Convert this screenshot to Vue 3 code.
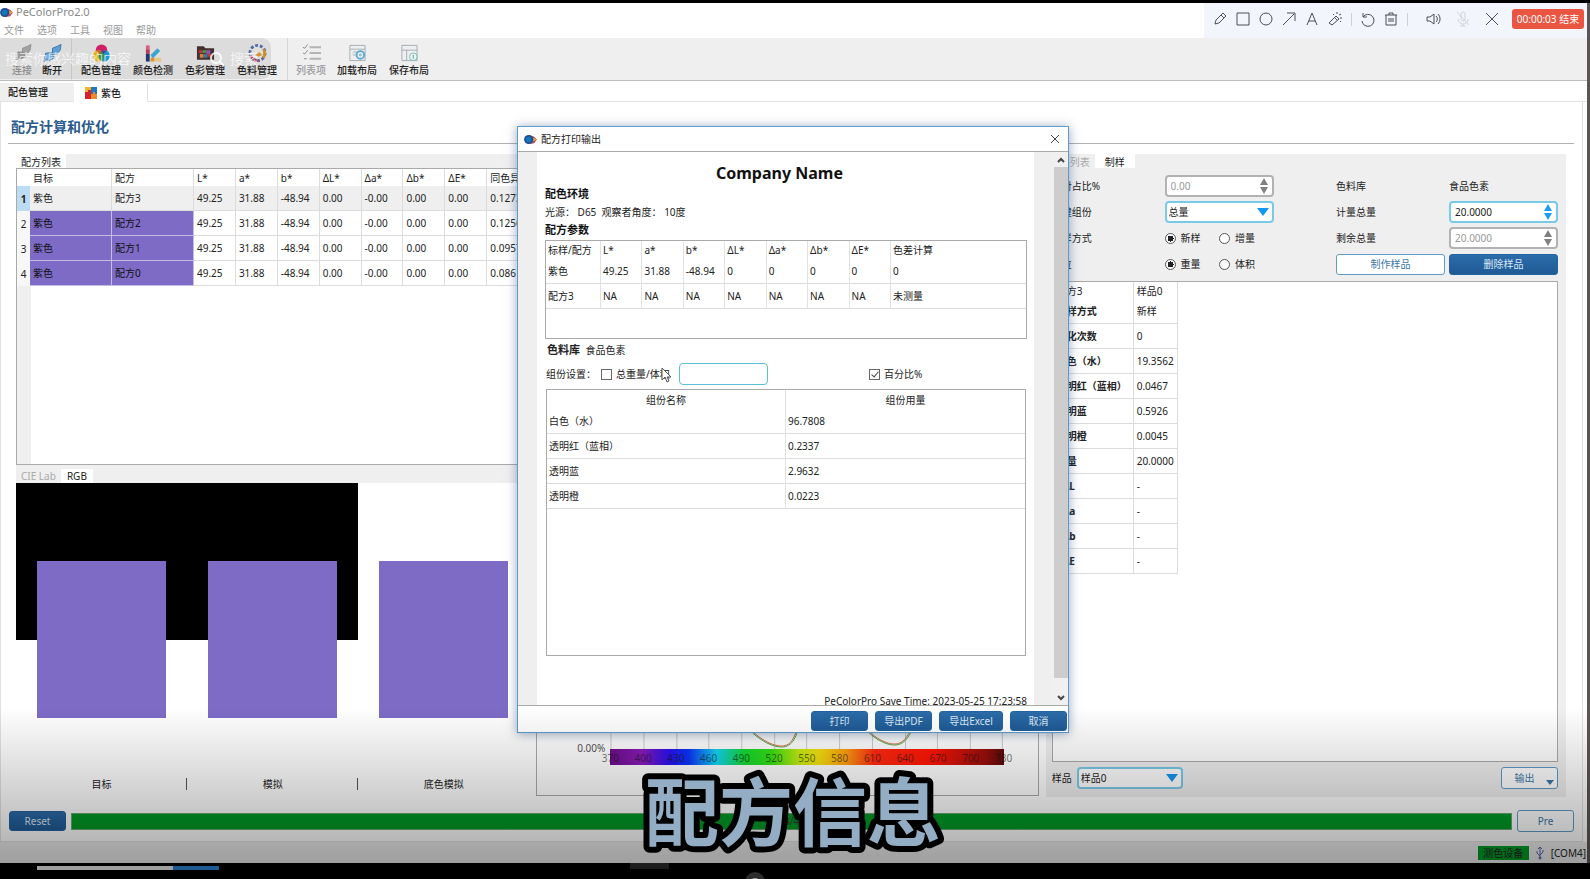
<script setup>
import { ref } from 'vue'

const menus = ['文件', '选项', '工具', '视图', '帮助']

const recipeHead = ['目标', '配方', 'L*', 'a*', 'b*', 'ΔL*', 'Δa*', 'Δb*', 'ΔE*', '同色异谱']
const recipes = [
  ['紫色', '配方3', '49.25', '31.88', '-48.94', '0.00', '-0.00', '0.00', '0.00', '0.1273'],
  ['紫色', '配方2', '49.25', '31.88', '-48.94', '0.00', '-0.00', '0.00', '0.00', '0.1256'],
  ['紫色', '配方1', '49.25', '31.88', '-48.94', '0.00', '-0.00', '0.00', '0.00', '0.0957'],
  ['紫色', '配方0', '49.25', '31.88', '-48.94', '0.00', '-0.00', '0.00', '0.00', '0.0861'],
]

const paramHead = ['标样/配方', 'L*', 'a*', 'b*', 'ΔL*', 'Δa*', 'Δb*', 'ΔE*', '色差计算']
const params = [
  ['紫色', '49.25', '31.88', '-48.94', '0', '0', '0', '0', '0'],
  ['配方3', 'NA', 'NA', 'NA', 'NA', 'NA', 'NA', 'NA', '未测量'],
]

const parts = [
  ['白色（水）', '96.7808'],
  ['透明红（蓝相）', '0.2337'],
  ['透明蓝', '2.9632'],
  ['透明橙', '0.0223'],
]

const samples = [
  ['制样方式', '新样'],
  ['优化次数', '0'],
  ['白色（水）', '19.3562'],
  ['透明红（蓝相）', '0.0467'],
  ['透明蓝', '0.5926'],
  ['透明橙', '0.0045'],
  ['总量', '20.0000'],
  ['ΔL', '-'],
  ['Δa', '-'],
  ['Δb', '-'],
  ['ΔE', '-'],
]

const waves = [370, 400, 430, 460, 490, 520, 550, 580, 610, 640, 670, 700, 730]
const swatches = ['目标', '模拟', '底色模拟']

const mode = ref('new')
const unit = ref('weight')
const useTotal = ref(false)
const usePercent = ref(true)
</script>

<template>
  <div class="screen">
    <div class="window">
      <header class="titlebar">
        <svg class="logo" viewBox="0 0 14 12"><path d="M6 1l5 2 3 3-3 4-5 1z" fill="#b84a5a" /><path d="M10 4l4 2-4 2z" fill="#e8b23a" /><ellipse cx="5" cy="6" rx="5" ry="5" fill="#1d4f94" /><circle cx="5" cy="6" r="3" fill="#1479bb" /></svg>
        <span>PeColorPro2.0</span>
      </header>
      <nav class="menubar">
        <button v-for="m in menus" :key="m" type="button">{{ m }}</button>
      </nav>

      <div class="toolbar">
        <button type="button" class="tool w30 off">
          <svg viewBox="0 0 20 20"><path d="M2 17l4-4M10 5l5-2 4-2-1 6-3 4-5 0z" fill="#b0b0b0" stroke="#a0a0a0" /><path d="M5 9l6 0 3 5-4 2-3-1-3 2z" fill="#a5a5a5" stroke="#999" /></svg>
          <span>连接</span>
        </button>
        <button type="button" class="tool w30">
          <svg viewBox="0 0 20 20"><path d="M10 5l5-2 4-2-1 6-3 4-5 0z" fill="#68aee6" stroke="#3f7fb8" /><path d="M3 10l6 0 3 5-5 3-3-1-3 2 1-4z" fill="#7dbbec" stroke="#3f7fb8" /><path d="M9 9l3 3" stroke="#3f7fb8" /></svg>
          <span>断开</span>
        </button>
        <i class="bar-sep"></i>
        <button type="button" class="tool w52">
          <svg viewBox="0 0 20 20"><circle cx="10" cy="7" r="6" fill="#e4216f" /><circle cx="7" cy="13" r="6" fill="#f4c41c" /><circle cx="13" cy="13" r="6" fill="#21a6dd" /><path d="M10 8a6 6 0 010 10 6 6 0 010-10z" fill="#35a04c" /><path d="M5 8a6 6 0 015 0 6 6 0 00-2 3z" fill="#e8632a" /><path d="M10 8a6 6 0 015 0l-3 3z" fill="#5b3d9b" /></svg>
          <span>配色管理</span>
        </button>
        <button type="button" class="tool w52">
          <svg viewBox="0 0 20 20"><path d="M2 2h4v4H2z" fill="#e96a8b" /><path d="M2 6h4v5H2z" fill="#c84362" /><path d="M2 11h4v8H2z" fill="#263a7c" /><path d="M7 12l7-7 3 3-8 8z" fill="#3fb3e0" /><path d="M7 15h4v4H7z" fill="#f0a030" /><path d="M11 15h7v4h-7z" fill="#f7d792" /></svg>
          <span>颜色检测</span>
        </button>
        <button type="button" class="tool w52">
          <svg viewBox="0 0 20 20"><path d="M1 3h7l2 2h9v12H1z" fill="#4a3535" /><path d="M3 7h4v3H3zM12 11h4v3h-4z" fill="#d83b3b" /><path d="M7 7h4v3H7z" fill="#50a05a" /><path d="M11 7h4v4h-4z" fill="#9c5cc0" /><path d="M4 11h4v4H4z" fill="#e09038" /><path d="M8 11h4v4H8z" fill="#3d83b0" /></svg>
          <span>色彩管理</span>
        </button>
        <button type="button" class="tool w52">
          <svg viewBox="0 0 20 20" fill="none"><circle cx="10" cy="10" r="8" stroke="#5673b7" stroke-width="3" stroke-dasharray="3 2" /><path d="M3 13a8 8 0 009 5" stroke="#cf3d54" stroke-width="3" stroke-dasharray="3 2" /><path d="M16 6a8 8 0 010 9" stroke="#dc9b2f" stroke-width="3" /><circle cx="10" cy="10" r="6" fill="#f7f3ee" /><path d="M8 12l4-3 3 3-4 2z" fill="#e0a13a" /></svg>
          <span>色料管理</span>
        </button>
        <i class="bar-sep"></i>
        <button type="button" class="tool w40 off">
          <svg viewBox="0 0 20 20" fill="none" stroke="#b4b4b4" stroke-width="2"><path d="M8 4h12M8 10h12M8 16h12" /><path d="M1 4l2 1 3-4M1 10l2 1 3-4M2 16h3" stroke="#8b8b8b" stroke-width="1" /></svg>
          <span>列表项</span>
        </button>
        <button type="button" class="tool w52">
          <svg viewBox="0 0 20 20" fill="none" stroke="#a3adb2"><path d="M2 2h16v16H2zM2 6h16" /><path d="M5 9h5M5 12h3" /><circle cx="13" cy="12" r="4" stroke="#5aa9d4" stroke-width="2" /><circle cx="13" cy="12" r="1" stroke="#5aa9d4" /></svg>
          <span>加载布局</span>
        </button>
        <button type="button" class="tool w52">
          <svg viewBox="0 0 20 20" fill="none" stroke="#a3adb2"><path d="M2 2h16v16H2zM2 7h16M7 7v11" /><circle cx="14" cy="14" r="4" fill="#eef6f4" stroke="#78bcb5" /><path d="M14 12v4" stroke="#4e9f97" /></svg>
          <span>保存布局</span>
        </button>
        <div class="search-ghost">
          <span class="hint">搜索你感兴趣的内容</span>
          <svg viewBox="0 0 16 16" fill="none" stroke="#fff" stroke-width="2"><circle cx="7" cy="7" r="5" /><path d="M11 11l4 4" /></svg>
          <span>搜索</span>
        </div>
      </div>

      <div class="doc-tabs">
        <button type="button" class="doc-tab">配色管理</button>
        <button type="button" class="doc-tab on">
          <svg viewBox="0 0 14 14"><path d="M1 1h7v6H1z" fill="#f2b52a" /><path d="M7 1h6v7H7z" fill="#2378bd" /><path d="M1 6h3V4h3v3l2 2v4H1z" fill="#d3232e" /><path d="M7 8h2V6h2v2h2v5H7z" fill="#f08a28" /></svg>
          紫色
        </button>
        <i class="doc-rest"></i>
      </div>

      <main class="page">
        <h1>配方计算和优化</h1>
        <div class="work">
          <section class="left">
            <div class="tabs"><button type="button" class="on">配方列表</button></div>
            <div class="list-box">
              <table class="recipes">
                <thead>
                  <tr><th class="num"></th><th v-for="(h, i) in recipeHead" :key="h" :class="{ name: i < 2, last: i === 9 }">{{ h }}</th></tr>
                </thead>
                <tbody>
                  <tr v-for="(r, i) in recipes" :key="i" :class="{ current: i === 0 }">
                    <th class="num">{{ i + 1 }}</th>
                    <td v-for="(c, j) in r" :key="j" :class="{ tint: i > 0 && j < 2 }">{{ c }}</td>
                  </tr>
                </tbody>
              </table>
            </div>
            <div class="tabs low"><button type="button" class="dim">CIE Lab</button><button type="button" class="on">RGB</button></div>
            <div class="swatches">
              <div v-for="(s, i) in swatches" :key="s" class="cell" :class="{ dark: i < 2 }"><div class="patch"></div><span>{{ s }}</span></div>
            </div>
          </section>

          <section class="chart">
            <div class="plot">
              <span class="zero">0.00%</span>
              <svg class="curves" viewBox="0 0 394 60" preserveAspectRatio="none" fill="none">
                <path d="M1 0v60M34 0v60M67 0v60M99 0v60M132 0v60M165 0v60M197 0v60M230 0v60M263 0v60M296 0v60M328 0v60M361 0v60M393 0v60" stroke="#ccc" />
                <path d="M130 30C144 48 160 58 172 58C183 58 187 48 191 30M247 30C260 48 275 56 285 56C297 56 301 44 308 30" stroke="#45a83a" />
                <path d="M131 30C145 47 160 57 172 57C182 57 186 47 190 30M248 30C261 47 275 55 285 55C296 55 300 43 307 30" stroke="#d07040" />
              </svg>
              <div class="spectrum"><span v-for="w in waves" :key="w">{{ w }}</span></div>
            </div>
          </section>

          <section class="right">
            <div class="tabs"><button type="button" class="dim">样品列表</button><button type="button" class="on">制样</button></div>
            <div class="make">
              <div class="form">
                <label for="ratio">相对占比%</label>
                <div class="spin off"><input id="ratio" type="text" value="0.00" disabled /><i class="up"></i><i class="down"></i></div>
                <span class="c4">色料库</span><span>食品色素</span>

                <label for="key">关键组份</label>
                <div class="pick"><select id="key"><option>总量</option></select><i></i></div>
                <label class="c4" for="sum">计量总量</label>
                <div class="spin"><input id="sum" type="text" value="20.0000" /><i class="up"></i><i class="down"></i></div>

                <span>制样方式</span>
                <div class="radios">
                  <label><input v-model="mode" type="radio" name="mode" value="new" />新样</label>
                  <label><input v-model="mode" type="radio" name="mode" value="add" />增量</label>
                </div>
                <label class="c4" for="rest">剩余总量</label>
                <div class="spin off"><input id="rest" type="text" value="20.0000" disabled /><i class="up"></i><i class="down"></i></div>

                <span>单位</span>
                <div class="radios">
                  <label><input v-model="unit" type="radio" name="unit" value="weight" />重量</label>
                  <label><input v-model="unit" type="radio" name="unit" value="volume" />体积</label>
                </div>
                <button type="button" class="btn c4">制作样品</button>
                <button type="button" class="btn fill">删除样品</button>
              </div>
              <div class="sample-box">
                <table class="samples">
                  <thead><tr><th>配方3</th><th>样品0</th></tr></thead>
                  <tbody><tr v-for="s in samples" :key="s[0]" :class="{ delta: s[1] === '-' }"><th>{{ s[0] }}</th><td>{{ s[1] }}</td></tr></tbody>
                </table>
              </div>
              <div class="sample-pick">
                <label for="sample">样品</label>
                <div class="pick"><select id="sample"><option>样品0</option></select><i></i></div>
                <button type="button" class="btn export">输出<i></i></button>
              </div>
            </div>
          </section>
        </div>
        <div class="steps">
          <button type="button" class="btn fill">Reset</button>
          <div class="progress">4/4</div>
          <button type="button" class="btn">Pre</button>
        </div>
      </main>

      <footer class="status">
        <span class="device">测色设备</span>
        <svg viewBox="0 0 10 14" fill="none" stroke="#5b62a8"><path d="M5 1v12M2 5v2l3 3M8 4v2L5 9" /><path d="M3 3l2-2 2 2" /><circle cx="5" cy="12" r="1" fill="#5b62a8" /></svg>
        <span>[COM4]</span>
      </footer>

      <div class="marker">
        <svg viewBox="0 0 16 16"><path d="M3 13l1-4 7-7 3 3-7 7zM9 4l3 3" /></svg>
        <svg viewBox="0 0 16 16"><path d="M2 2h12v12H2z" /></svg>
        <svg viewBox="0 0 16 16"><circle cx="8" cy="8" r="6" /></svg>
        <svg viewBox="0 0 16 16"><path d="M2 14L13 3M6 2h8v8" /></svg>
        <svg viewBox="0 0 16 16"><path d="M3 14L8 2l5 12M5 10h6" /></svg>
        <svg viewBox="0 0 16 16"><path d="M2 12l7-7 3 3-7 6zM8 7l2 2M10 1v2M14 3l-2 1M13 7h2M14 11l-1-1M6 3l1 1" /></svg>
        <i></i>
        <svg viewBox="0 0 16 16"><path d="M3 2v4h4M3 6a6 6 0 11-1 4" /></svg>
        <svg viewBox="0 0 16 16"><path d="M2 4h12M6 4V2h4v2M3 4v10h10V4M6 7v4M8 7v4M10 7v4" /></svg>
        <i class="end"></i>
        <svg class="far" viewBox="0 0 16 16"><path d="M1 6v4h3l4 3V3L4 6zM10 5a4 4 0 010 6M12 3a7 7 0 010 10" /></svg>
        <svg class="far pale" viewBox="0 0 16 16"><path d="M6 3a2 2 0 014 0v5a2 2 0 01-4 0zM3 8a5 5 0 0010 0M8 13v2M5 15h6M2 1l12 13" /></svg>
        <svg class="far" viewBox="0 0 16 16"><path d="M2 2l12 12M14 2L2 14" /></svg>
        <button type="button">00:00:03 结束</button>
      </div>

      <div class="dialog" role="dialog" aria-label="配方打印输出">
        <div class="dialog-title">
          <svg class="logo" viewBox="0 0 14 12"><path d="M6 1l5 2 3 3-3 4-5 1z" fill="#b84a5a" /><path d="M10 4l4 2-4 2z" fill="#e8b23a" /><ellipse cx="5" cy="6" rx="5" ry="5" fill="#1d4f94" /><circle cx="5" cy="6" r="3" fill="#1479bb" /></svg>
          <span>配方打印输出</span>
          <button type="button" aria-label="关闭"><svg viewBox="0 0 10 10" fill="none" stroke="#444"><path d="M1 1l8 8M9 1L1 9" /></svg></button>
        </div>
        <div class="dialog-body">
          <div class="paper">
            <h2>Company Name</h2>
            <h3>配色环境</h3>
            <p>光源： D65&nbsp; 观察者角度： 10度</p>
            <h3>配方参数</h3>
            <div class="param-box">
              <table class="params">
                <thead><tr><th v-for="h in paramHead" :key="h">{{ h }}</th></tr></thead>
                <tbody><tr v-for="p in params" :key="p[0]"><td v-for="(c, i) in p" :key="i">{{ c }}</td></tr></tbody>
              </table>
            </div>
            <p class="lib"><b>色料库</b> 食品色素</p>
            <div class="setup">
              <span>组份设置：</span>
              <label class="total"><input v-model="useTotal" type="checkbox" />总重量/体积</label>
              <input class="amount" type="text" aria-label="总重量/体积" />
              <label class="percent"><input v-model="usePercent" type="checkbox" />百分比%</label>
              <svg class="cursor" viewBox="0 0 12 16"><path d="M1 1v12l3-3 2 5 2-1-2-4h4z" fill="#fff" stroke="#555" /></svg>
            </div>
            <div class="part-box">
              <table class="parts">
                <thead><tr><th>组份名称</th><th>组份用量</th></tr></thead>
                <tbody><tr v-for="p in parts" :key="p[0]"><td>{{ p[0] }}</td><td>{{ p[1] }}</td></tr></tbody>
              </table>
            </div>
            <p class="saved">PeColorPro Save Time: 2023-05-25 17:23:58</p>
          </div>
          <div class="scroll">
            <svg viewBox="0 0 8 6" fill="none" stroke="#444" stroke-width="2"><path d="M1 5l3-3 3 3" /></svg>
            <i></i>
            <svg viewBox="0 0 8 6" fill="none" stroke="#444" stroke-width="2"><path d="M1 1l3 3 3-3" /></svg>
          </div>
        </div>
        <div class="dialog-foot">
          <button type="button" class="btn fill">打印</button>
          <button type="button" class="btn fill">导出PDF</button>
          <button type="button" class="btn fill wide">导出Excel</button>
          <button type="button" class="btn fill">取消</button>
        </div>
      </div>
    </div>

    <div class="taskbar">
      <i class="task"></i><i class="task blue"></i><i class="grip"></i><i class="knob"></i>
    </div>
    <div class="fade"></div>
    <svg class="caption"><text x="50%" y="77">配方信息</text></svg>
  </div>
</template>

<style>
body { margin: 0; background: #000; }
</style>

<style scoped>
.screen {
  position: relative;
  box-sizing: border-box;
  display: flex;
  flex-direction: column;
  height: 100vh;
  min-height: 860px;
  padding-top: 3px;
  overflow: hidden;
  background: #000;
  color: #222;
  font: 10px/14px "Noto Sans", "Noto Sans CJK SC", sans-serif;
}
.screen *, .screen *::before, .screen *::after { box-sizing: border-box; }
button, input, select { margin: 0; padding: 0; border: 0; background: none; color: inherit; font: inherit; }
h1, h2, h3, p { margin: 0; }
i { display: block; }
table { border-collapse: separate; border-spacing: 0; table-layout: fixed; }
th, td { padding: 0 3px; font-weight: 400; text-align: left; white-space: nowrap; overflow: hidden; }

.window {
  flex: 1;
  display: flex;
  flex-direction: column;
  min-height: 0;
  background: #fff;
  border-right: 3px solid #5d5552;
}
.titlebar { display: flex; align-items: center; gap: 3px; height: 18px; color: #888; font-size: 11px; }
.logo { width: 13px; height: 11px; }
.menubar { display: flex; gap: 13px; height: 17px; padding-left: 4px; color: #999; }

.toolbar {
  position: relative;
  display: flex;
  height: 43px;
  padding-left: 7px;
  background: #efefef;
  border-bottom: 1px solid #bdbdbd;
}
.tool { display: flex; flex-direction: column; align-items: center; padding-top: 5px; color: #222; font-weight: 500; white-space: nowrap; }
.tool svg { width: 19px; height: 20px; }
.tool.off { color: #999; }
.w30 { width: 30px; }
.w40 { width: 40px; }
.w52 { width: 52px; }
.bar-sep { width: 4px; margin-left: 4px; border-left: 1px solid #d8d8d8; }
.search-ghost {
  position: absolute;
  inset: 0 auto 1px 0;
  display: flex;
  align-items: center;
  width: 271px;
  padding: 0 5px;
  border-radius: 0 9px 9px 0;
  background: rgba(0, 0, 0, 0.08);
  color: rgba(255, 255, 255, 0.7);
  font-size: 14px;
  pointer-events: none;
}
.search-ghost .hint { flex: 1; }
.search-ghost svg { width: 16px; height: 16px; margin-right: 5px; opacity: 0.85; }
.search-ghost span:last-child { width: 36px; }

.doc-tabs { display: flex; height: 21px; padding-top: 2px; }
.doc-tab { display: flex; align-items: center; gap: 3px; width: 74px; padding-left: 8px; background: #efefef; border: solid #e2e2e2; border-width: 0 0 1px; font-weight: 500; }
.doc-tab.on { padding-left: 10px; background: #fff; border-width: 0 1px 0 0; }
.doc-tab svg { width: 14px; height: 14px; }
.doc-rest { flex: 1; border-bottom: 1px solid #e2e2e2; }

.page { flex: 1; display: flex; flex-direction: column; min-height: 0; margin-right: 4px; border: solid #e2e2e2; border-width: 0 1px 1px; padding-bottom: 9px; }
h1 { margin: 0 8px 0 7px; padding: 8px 0 0 3px; border-bottom: 1px solid #b0b0b0; color: #2b5b8c; font-size: 14px; line-height: 33px; font-weight: 700; }
.work {
  flex: 1;
  display: grid;
  grid-template-columns: 513fr 502fr 520fr;
  gap: 7px;
  min-height: 0;
  margin: 10px 16px 13px 15px;
}
.tabs { display: flex; height: 14px; background: #efefef; }
.tabs button { padding: 0 5px; line-height: 16px; }
.tabs .on { background: #fff; }
.tabs .dim { color: #aaa; }
.tabs.low { height: 18px; padding-top: 4px; }
.tabs.low button { line-height: 14px; }
.tabs.low .on { padding: 0 6px; }

.left, .right { display: flex; flex-direction: column; min-width: 0; min-height: 0; }
.list-box { flex: 296 1 0; min-height: 0; overflow: hidden; border: 1px solid #aaa; border-right: 0; background: linear-gradient(90deg, #efefef 14px, #fff 14px); }
.recipes { width: 100%; background: #fff; }
.recipes tr { height: 25px; }
.recipes thead tr { height: 17px; }
.recipes th, .recipes td { padding: 0 3px; border-right: 1px solid #dcdcdc; border-bottom: 1px solid #dcdcdc; }
.recipes thead th { border-bottom: 0; }
.recipes th.num { width: 13px; padding: 0; border: 0; text-align: center; }
.recipes .name { width: 82px; }
.recipes .last { width: 42px; }
.recipes .current td { background: #efefef; }
.recipes tbody .num { background: #f7f7f7; }
.recipes tbody .current .num { background: #bcdcf4; font-weight: 700; }
.recipes td.tint { background: #7d6bc6; border-color: #c5bce6; color: #111; }

.swatches { flex: 315 1 0; display: grid; grid-template-columns: repeat(3, 1fr); min-height: 0; }
.cell { display: flex; flex-direction: column; align-items: center; justify-content: space-between; padding: 78px 21px 6px; }
.cell.dark { background: linear-gradient(#000 157px, transparent 157px); }
.cell span { position: relative; width: 100%; text-align: center; }
.cell.dark span::after { content: ""; position: absolute; right: -21px; top: 1px; height: 12px; border-left: 1px solid #555; }
.patch { width: 100%; height: 157px; background: #7d6bc6; }

.chart { display: flex; align-items: flex-end; min-width: 0; border: 1px solid #aaa; border-top: 0; margin-bottom: 1px; }
.plot { position: relative; flex: 1; margin: 0 34px 30px 73px; }
.zero { position: absolute; right: calc(100% + 5px); bottom: 10px; color: #555; }
.curves { display: block; width: 100%; height: 60px; }
.spectrum {
  display: flex;
  justify-content: space-between;
  height: 16px;
  background: linear-gradient(90deg, #6a0f86, #8a1ab8 8%, #2a10f0 15%, #0b35f8 20%, #12d4f6 27%, #14d832 34%, #35df12 41%, #c5ec10 48%, #f4e00e 53%, #ff9c10 60%, #ff2a10 67%, #ff1405 82%, #9a0f0c 95%, #5c0a08);
  color: rgba(20, 20, 20, 0.6);
  line-height: 18px;
}
.spectrum span { width: 0; display: flex; justify-content: center; }

.right { background: #efefef; }
.right .tabs .dim { padding-left: 4px; }
.right .tabs .on { padding: 0 10px; }
.make { flex: 1; display: flex; flex-direction: column; min-height: 0; padding: 7px 8px 8px 6px; }
.form { display: grid; grid-template-columns: repeat(2, minmax(0, 2fr)) minmax(0, 1fr) repeat(2, minmax(0, 2fr)); gap: 4px; align-items: center; white-space: nowrap; }
.form > * { height: 22px; line-height: 22px; }
.form > .btn { height: 21px; line-height: 19px; }
.c4 { grid-column: 4; }
.spin, .pick { position: relative; background: #fff; border: 2px solid #78cbe8; border-radius: 4px; }
.spin input { display: block; width: 100%; height: 18px; padding: 0 4px; line-height: 18px; }
.spin i, .pick i { position: absolute; right: 4px; width: 0; height: 0; border: 4px solid transparent; pointer-events: none; }
.spin .up { top: 1px; border-top: 0; border-bottom: 7px solid #1e9df0; }
.spin .down { bottom: 1px; border-bottom: 0; border-top: 7px solid #1e9df0; }
.spin.off { border-color: #b2b2b2; color: #999; }
.spin.off .up { border-bottom-color: #808080; }
.spin.off .down { border-top-color: #808080; }
.pick select { display: block; width: 100%; height: 18px; padding: 0 2px; appearance: none; line-height: 18px; }
.pick i { top: 5px; border-width: 8px 6px 0; border-top-color: #1298ee; right: 3px; }
.radios { display: flex; line-height: 22px; }
.radios label { display: flex; align-items: center; gap: 5px; width: 57px; }
.radios input { appearance: none; width: 11px; height: 11px; border: 1px solid #555; border-radius: 50%; background: #fff; }
.radios input:checked { background: radial-gradient(#222 0 3px, #fff 3px); }
.btn { height: 20px; border: 1px solid #5f9bc8; border-radius: 3px; background: #fff; color: #3a78a8; line-height: 18px; white-space: nowrap; }
.btn.fill { border-color: #2263a0; background: linear-gradient(#2b6caa, #1f5a95); color: #dbe8f4; }

.sample-box { flex: 1; min-height: 0; margin-top: 6px; border: 1px solid #aaa; background: #fff; overflow: hidden; }
.samples { width: 125px; }
.samples tr { height: 25px; }
.samples thead tr { height: 17px; }
.samples th, .samples td { border-right: 1px solid #dcdcdc; border-bottom: 1px solid #dcdcdc; }
.samples thead th { border-bottom: 0; }
.samples th:first-child { width: 81px; padding-left: 4px; }
.samples tbody th { font-weight: 700; }
.samples .delta th:first-child { padding-left: 10px; }
.sample-pick { display: flex; align-items: center; gap: 5px; height: 22px; margin-top: 5px; }
.sample-pick .pick { width: 106px; height: 22px; }
.export { position: relative; width: 57px; height: 22px; margin-left: auto; padding-right: 10px; }
.export i { position: absolute; right: 3px; bottom: 3px; border: solid transparent; border-width: 5px 4px 0; border-top-color: #3a78a8; }

.steps { display: flex; align-items: center; gap: 5px; height: 22px; margin: 0 8px; }
.steps .btn { width: 57px; height: 22px; }
.steps .fill { height: 20px; }
.progress { flex: 1; height: 17px; border: 1px solid #6aa878; background: #009b26; color: #333; line-height: 15px; text-align: center; }

.status { display: flex; align-items: center; justify-content: flex-end; gap: 6px; height: 21px; padding-right: 1px; background: #ececec; }
.status svg { width: 10px; height: 14px; }
.device { width: 51px; height: 14px; background: #009b26; text-align: center; }

.marker {
  position: absolute;
  top: 3px;
  right: 3px;
  display: flex;
  align-items: center;
  gap: 7px;
  height: 35px;
  padding: 0 3px 3px 8px;
  background: #f3f5fd;
}
.marker svg { width: 16px; height: 16px; fill: none; stroke: #4a4e58; stroke-width: 1; }
.marker i { width: 1px; height: 13px; margin: 0 1px; background: #cdd0d8; }
.marker .end { margin-right: 5px; }
.marker .far { margin: 0 0 0 6px; }
.marker .pale { stroke: #cfd2da; }
.marker button { width: 72px; height: 20px; margin-left: 5px; border-radius: 3px; background: #ea5542; color: #fff; }

.dialog {
  position: absolute;
  top: 126px;
  left: calc(50% - 2px);
  transform: translateX(-50%);
  width: 552px;
  border: 1px solid #5b9bcd;
  background: #fff;
  box-shadow: 0 1px 10px rgba(50, 80, 120, 0.5);
}
.dialog-title { display: flex; align-items: center; gap: 4px; height: 25px; padding: 0 8px 0 6px; border-bottom: 1px solid #aaa; }
.dialog-title button { display: flex; margin-left: auto; }
.dialog-title button svg { width: 10px; height: 10px; }
.dialog-body { display: flex; height: 554px; overflow: hidden; border-bottom: 1px solid #aaa; background: #efefef; }
.paper { flex: 1; margin: 0 20px 0 19px; padding: 9px 7px 0 8px; background: #fff; }
h2 { padding-right: 13px; color: #111; font-size: 16px; line-height: 24px; text-align: center; }
h3 { color: #111; font-size: 11px; line-height: 18px; }
.paper p { line-height: 18px; }
.param-box { height: 99px; margin-top: 1px; border: 1px solid #aaa; }
.params, .parts { width: 100%; }
.params tr, .parts tr { height: 25px; }
.params thead tr { height: 18px; }
.parts thead tr { height: 19px; }
.params th, .params td, .parts th, .parts td { padding: 0 2px; border-right: 1px solid #e2e2e2; border-bottom: 1px solid #dcdcdc; }
.params thead th, .parts thead th { border-bottom: 0; }
.params th:first-child { width: 55px; }
.params th:last-child { width: 135px; }
.params tr > :last-child, .parts tr > :last-child { border-right: 0; }
.lib { margin-top: 2px; }
.lib b { margin-right: 3px; padding-left: 2px; font-size: 11px; }
.setup { position: relative; display: flex; align-items: center; height: 22px; margin: 4px 0; padding-left: 1px; }
.setup label { display: flex; align-items: center; gap: 4px; }
.setup .total { width: 78px; margin-left: 5px; white-space: nowrap; }
.setup input[type="checkbox"] { appearance: none; flex: none; position: relative; width: 11px; height: 11px; border: 1px solid #666; background: #fff; }
.setup input[type="checkbox"]:checked::after { content: ""; position: absolute; left: 3px; top: 0; width: 4px; height: 7px; border: solid #444; border-width: 0 1px 1px 0; transform: rotate(40deg); }
.amount { width: 89px; height: 22px; border: 1px solid #5cc0d4; border-radius: 4px; background: #fff; }
.setup .percent { margin-left: 101px; }
.cursor { position: absolute; left: 116px; top: 4px; width: 12px; height: 16px; }
.part-box { height: 267px; margin: 0 1px; border: 1px solid #aaa; }
.parts thead th { text-align: center; }
.paper .saved { margin-top: 36px; text-align: right; }
.scroll { display: flex; flex-direction: column; align-items: center; width: 14px; padding: 5px 0 4px; background: #f0f0f0; }
.scroll svg { width: 8px; height: 6px; }
.scroll i { flex: 1; width: 100%; margin: 4px 0 17px; background: #cdcdcd; }
.dialog-foot { display: flex; justify-content: flex-end; gap: 7px; padding: 5px 1px 0 0; height: 26px; }
.dialog-foot .btn { width: 57px; }
.dialog-foot .wide { width: 64px; }

.taskbar { position: relative; display: flex; height: 16px; padding: 3px 0 0 37px; background: #000; }
.task { width: 136px; height: 4px; background: #f0f0f0; }
.task.blue { width: 46px; background: #2a86dc; }
.grip { position: absolute; left: 630px; top: 0; width: 39px; height: 6px; background: #2c2c2c; }
.knob { position: absolute; left: 745px; top: 9px; width: 20px; height: 20px; border: 6px solid #444; border-radius: 50%; background: #fff; }
.fade { position: absolute; inset: auto 0 0; height: 172px; background: linear-gradient(rgba(0, 0, 0, 0), rgba(0, 0, 0, 0.36)); pointer-events: none; }
.caption {
  position: absolute;
  left: 0;
  bottom: 16px;
  width: calc(100% - 4px);
  height: 100px;
  fill: #93aec4;
  stroke: #000;
  stroke-width: 12px;
  stroke-linejoin: round;
  paint-order: stroke fill;
  font: 700 74px/96px "Noto Sans CJK SC", sans-serif;
  text-anchor: middle;
  pointer-events: none;
}
</style>
